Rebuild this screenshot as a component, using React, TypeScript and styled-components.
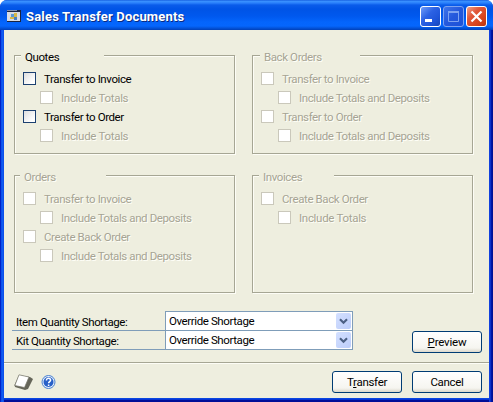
import React from 'react';
import styled, { createGlobalStyle, css } from 'styled-components';

const GlobalStyle = createGlobalStyle`
  * { box-sizing: border-box; }
  body { margin: 0; overflow: hidden; background: #fff; }
`;

const Window = styled.div`
  width: 493px;
  height: 402px;
  display: flex;
  flex-direction: column;
  overflow: hidden;
  border-radius: 7px 7px 0 0;
  background: linear-gradient(90deg, #0022c8 1px, #0a4ce8 1px, #1260f4 3px, #0840e0 4px, #0838dc 489px, #1a4ae0 490px, #0018b0 491px, #000e8c 493px);
  font-family: Roboto, 'Liberation Sans', sans-serif;
  font-size: 11.5px;
  line-height: 14px;
  color: #000;
  white-space: nowrap;
`;

const TitleBar = styled.header`
  height: 30px;
  flex: none;
  display: flex;
  align-items: center;
  padding: 3px 6px 0 7px;
  background: linear-gradient(#0a50d8 0, #3d94ff 1px, #2a80fb 3px, #0a5cea 5px, #0054e6 9px, #0058ee 16px, #0465fc 22px, #0566fd 26px, #0354dc 28px, #0040b8 30px);
`;

const Title = styled.h1`
  flex: 1;
  margin: 0 0 0 4px;
  font-size: 13px;
  line-height: 16px;
  font-weight: 700;
  letter-spacing: 0.18px;
  color: #fff;
  text-shadow: 1px 1px 0 #0a2a80;
`;

const CaptionButtons = styled.div`
  display: flex;
  gap: 2px;
`;

const CaptionButton = styled.button<{ $kind: 'normal' | 'dim' | 'close' }>`
  width: 21px;
  height: 21px;
  padding: 0;
  display: flex;
  border-radius: 3px;
  border: 1px solid ${p => (p.$kind === 'dim' ? '#7da2f0' : '#fff')};
  background: ${p =>
    p.$kind === 'close'
      ? 'linear-gradient(135deg, #f0a088, #e0583a 35%, #d8441c 70%, #b83410)'
      : p.$kind === 'dim'
        ? 'linear-gradient(135deg, #3f74ea, #2458dc 50%, #1c52d8)'
        : 'linear-gradient(135deg, #6f9cf8, #2c62e4 40%, #1f55da 70%, #1646b8)'};
`;

const Body = styled.main`
  flex: 1;
  display: flex;
  flex-direction: column;
  margin: 0 4px 4px;
  background: #eeeedf;
  box-shadow: 0 1px 0 #0a46e0, 0 2px 0 #0634d4, 0 4px 0 #000e98;
`;

const Groups = styled.div`
  display: grid;
  grid-template-columns: 222px 222px;
  grid-template-rows: 100px 119px;
  column-gap: 16px;
  row-gap: 20px;
  padding: 25px 0 0 10px;
`;

const GroupBox = styled.section<{ $off?: boolean }>`
  display: grid;
  grid-template-rows: 17px auto;
  border: solid #a6a694;
  border-width: 0 1px 1px;
  box-shadow: 1px 1px 0 #fdfdf6, inset 1px 0 0 #fdfdf6;
  width: 221px;
  height: 99px;
  ${p => p.$off && css`color: #a6a494; text-shadow: 1px 1px 0 #fffff8;`}
`;

const TallGroupBox = styled(GroupBox)`
  height: 118px;
`;

const Legend = styled.div<{ $lead: number; $gap: number }>`
  display: grid;
  grid-template-columns: ${p => p.$lead}px ${p => p.$gap}px 1fr;
`;

const Rule = styled.span`
  height: 2px;
  background: linear-gradient(#a6a694 50%, #fdfdf6 50%);
`;

const Text = styled.span<{ $ls?: number }>`
  letter-spacing: ${p => p.$ls ?? -0.4}px;
`;

const LegendText = styled(Text)`
  margin: -5px 0 0 4px;
`;

const Options = styled.div`
  display: flex;
  flex-direction: column;
  gap: 6px;
  padding-left: 8px;
`;

const Option = styled.label<{ $sub?: boolean; $off?: boolean }>`
  height: 13px;
  display: flex;
  align-items: center;
  gap: 8px;
  padding-left: ${p => (p.$sub ? 17 : 0)}px;
  ${p => p.$off && css`color: #a6a494; text-shadow: 1px 1px 0 #fffff8;`}
`;

const Box = styled.span<{ $off?: boolean }>`
  width: 13px;
  height: 13px;
  border: 1px solid ${p => (p.$off ? '#cac8bb' : '#1c4070')};
  background: ${p => (p.$off ? '#fff' : 'linear-gradient(135deg, #dedede, #fff 80%)')};
`;

const Mid = styled.div`
  height: 68px;
  flex: none;
  display: flex;
  justify-content: space-between;
  padding: 18px 7px 0 8px;
`;

const Fields = styled.div`
  width: 341px;
`;

const Field = styled.div`
  height: 19px;
  display: grid;
  grid-template-columns: 153px 188px;
  border-bottom: 1px solid #7f9db9;
`;

const FieldLabel = styled.div`
  padding: 3px 0 0 4px;
`;

const Combo = styled.div`
  height: 20px;
  display: flex;
  justify-content: space-between;
  align-items: flex-start;
  margin-top: -1px;
  padding: 2px 1px 0 3px;
  border: 1px solid #7f9db9;
  background: #fff;
`;

const Arrow = styled.span`
  width: 15px;
  height: 16px;
  margin-top: -1px;
  border-radius: 2px;
  background: linear-gradient(135deg, #d4e0ff, #bccdfa);
  display: flex;
`;

const Button = styled.button`
  width: 70px;
  height: 22px;
  padding: 0;
  border: 1px solid #003c74;
  border-radius: 3px;
  background: linear-gradient(#fff, #f6f5f0 80%, #dcd8cc);
  font: inherit;
  color: #000;
`;

const PreviewSlot = styled.div`
  padding-top: 19px;
`;

const Footer = styled.footer`
  flex: 1;
  display: flex;
  align-items: flex-start;
  border-top: 1px solid #a6a694;
  box-shadow: inset 0 1px 0 #fdfdf6;
  padding: 8px 7px 0 10px;
`;

const FooterIcons = styled.div`
  flex: 1;
  display: flex;
  gap: 7px;
  padding-top: 3px;
`;

const FooterButtons = styled.div`
  display: flex;
  gap: 10px;
`;

type Item = { text: string; sub?: boolean; ls?: number };
type GroupProps = { title: string; lead: number; gap: number; off?: boolean; tall?: boolean; ls?: number; items: Item[] };

function Group({ title, lead, gap, off, tall, ls, items }: GroupProps) {
  const Frame = tall ? TallGroupBox : GroupBox;
  return (
    <Frame $off={off}>
      <Legend $lead={lead} $gap={gap}>
        <Rule /><LegendText $ls={ls}>{title}</LegendText><Rule />
      </Legend>
      <Options>
        {items.map((it, i) => (
          <Option key={i} $sub={it.sub} $off={off || it.sub}>
            <Box $off={off || it.sub} />
            <Text $ls={it.ls}>{it.text}</Text>
          </Option>
        ))}
      </Options>
    </Frame>
  );
}

const invoice = { text: 'Transfer to Invoice' };
const order = { text: 'Transfer to Order' };
const totals = { text: 'Include Totals', sub: true, ls: -0.3 };
const deposits = { text: 'Include Totals and Deposits', sub: true };
const backOrder = { text: 'Create Back Order' };

const Chevron = () => (
  <Arrow>
    <svg width="15" height="16"><path d="M4 6.2l3.5 3.5L11 6.2" fill="none" stroke="#4d6185" strokeWidth="2.2" /></svg>
  </Arrow>
);

export default function App() {
  return (
    <>
      <GlobalStyle />
      <Window>
        <TitleBar>
          <svg width="15" height="13">
            <path d="M0 0h14v12H0z" fill="#1a2440" />
            <path d="M0 2h13v9H0z" fill="#d8dce4" />
            <path d="M0 0h10v1H0z" fill="#8090b0" />
            <path d="M4 4h3v3H4z" fill="#5a9ad8" /><path d="M7 3h3v4H7z" fill="#d8b848" />
            <path d="M3 7h4v2H3z" fill="#d8b848" /><path d="M7 7h3v3H7z" fill="#4a80c0" />
          </svg>
          <Title>Sales Transfer Documents</Title>
          <CaptionButtons>
            <CaptionButton $kind="normal" aria-label="Minimize">
              <svg width="19" height="19"><path d="M4 12h7v3H4z" fill="#fff" /></svg>
            </CaptionButton>
            <CaptionButton $kind="dim" aria-label="Maximize">
              <svg width="19" height="19"><path d="M4.5 5v9.5h10V5M4 5.5h11" fill="none" stroke="#7da2f0" /><path d="M4 4h11v2H4z" fill="#7da2f0" /></svg>
            </CaptionButton>
            <CaptionButton $kind="close" aria-label="Close">
              <svg width="19" height="19"><path d="M4.5 4.5l10 10M14.5 4.5l-10 10" stroke="#fff" strokeWidth="2.2" /></svg>
            </CaptionButton>
          </CaptionButtons>
        </TitleBar>
        <Body>
          <Groups>
            <Group title="Quotes" lead={6} gap={83} items={[invoice, totals, order, totals]} />
            <Group title="Back Orders" lead={7} gap={100} off items={[invoice, deposits, order, deposits]} />
            <Group title="Orders" lead={5} gap={86} off tall items={[invoice, deposits, backOrder, deposits]} />
            <Group title="Invoices" lead={6} gap={75} off tall items={[backOrder, totals]} />
          </Groups>
          <Mid>
            <Fields>
              <Field>
                <FieldLabel><Text>Item Quantity Shortage:</Text></FieldLabel>
                <Combo><Text>Override Shortage</Text><Chevron /></Combo>
              </Field>
              <Field>
                <FieldLabel><Text>Kit Quantity Shortage:</Text></FieldLabel>
                <Combo><Text>Override Shortage</Text><Chevron /></Combo>
              </Field>
            </Fields>
            <PreviewSlot><Button><Text $ls={-0.2}><u>P</u>review</Text></Button></PreviewSlot>
          </Mid>
          <Footer>
            <FooterIcons>
              <svg width="20" height="17">
                <path d="M5 1l11 2 3 2-5 10-3 1-10-3-.5-2z" fill="#66665a" />
                <path d="M5 .8l10 2.2-4.5 10.5L.8 11.5z" fill="#fff" stroke="#77776a" strokeWidth=".7" />
              </svg>
              <svg width="15" height="16">
                <circle cx="7.5" cy="8" r="6.5" fill="#e4eefa" stroke="#4a80d0" />
                <circle cx="7.5" cy="8" r="5" fill="#2860c8" />
                <path d="M5.4 6.4c0-3 4.4-2.6 4.2-.1C9.5 7.7 7.6 7.6 7.6 9.3M7.6 10.4v1.6" fill="none" stroke="#fff" strokeWidth="1.5" />
              </svg>
            </FooterIcons>
            <FooterButtons>
              <Button><Text $ls={-0.3}>T<u>r</u>ansfer</Text></Button>
              <Button><Text $ls={-0.3}>Cancel</Text></Button>
            </FooterButtons>
          </Footer>
        </Body>
      </Window>
    </>
  );
}
